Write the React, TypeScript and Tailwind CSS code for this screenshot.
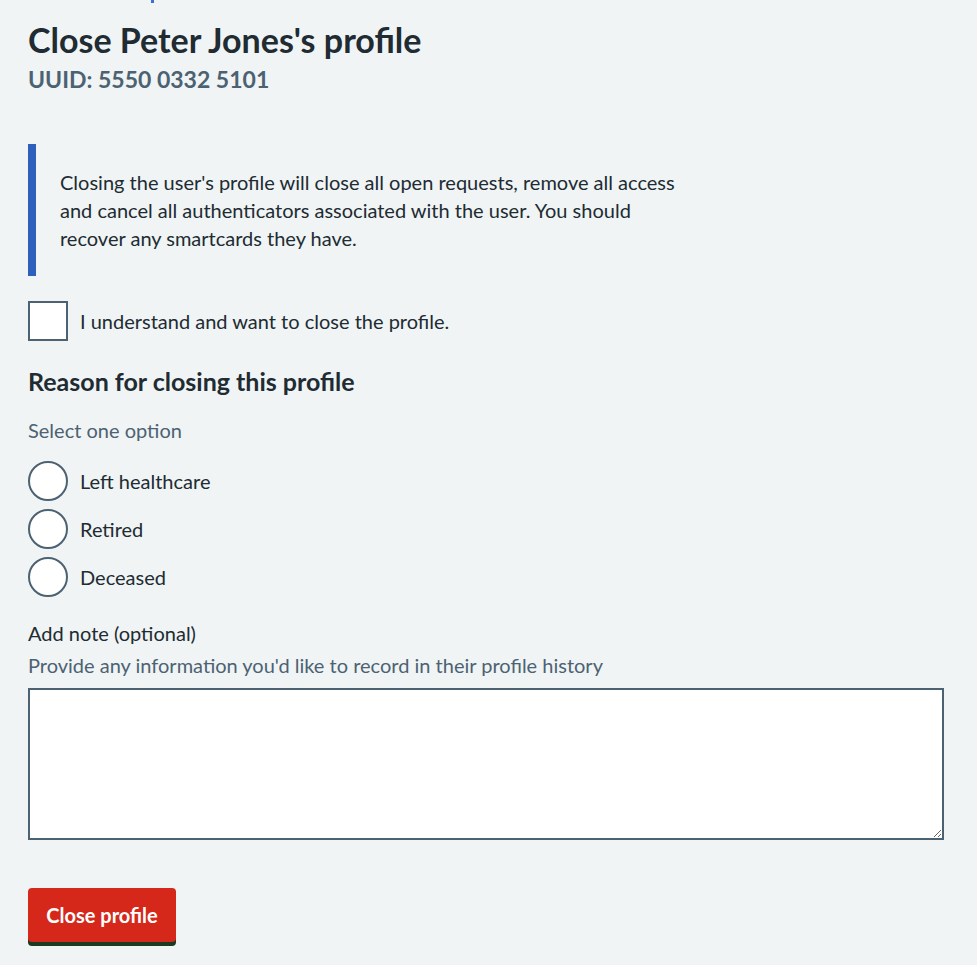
export default function App() {
  const reasons = ["Left healthcare", "Retired", "Deceased"];

  return (
    <main
      className="min-h-[965px] bg-[#f0f4f5] pl-[28px] pr-[33px] text-[#212b32]"
      style={{ fontFamily: "Lato, 'Liberation Sans', sans-serif" }}
    >
      <div className="h-[20px]">
        <span className="ml-[123px] block h-[3px] w-[3px] bg-[#3c6fd6]" />
      </div>
      <h1 className="text-[34px] font-bold leading-[40px]">Close Peter Jones's profile</h1>
      <p className="mt-[3px] text-[23px] font-bold leading-[32px] text-[#4c6272]">UUID: 5550 0332 5101</p>

      <div className="mt-[49px] border-l-[8px] border-[#2f5fba] py-[24px] pl-[24px]">
        <p className="text-[20px] leading-[28px]">
          Closing the user's profile will close all open requests, remove all access
          <br />
          and cancel all authenticators associated with the user. You should
          <br />
          recover any smartcards they have.
        </p>
      </div>

      <label className="mt-[25px] flex items-center gap-[12px]">
        <span className="h-[40px] w-[40px] shrink-0 border-2 border-[#4c6272] bg-white" />
        <span className="text-[20px] leading-[28px]">I understand and want to close the profile.</span>
      </label>

      <fieldset className="mt-[24px]">
        <legend className="text-[25px] font-bold leading-[32px]">Reason for closing this profile</legend>
        <p className="mt-[19px] text-[20px] leading-[28px] text-[#4c6272]">Select one option</p>
        <div className="mt-[17px] flex flex-col gap-[8px]">
          {reasons.map((r) => (
            <label key={r} className="flex items-center gap-[12px]">
              <span className="h-[40px] w-[40px] shrink-0 rounded-full border-2 border-[#4c6272] bg-white" />
              <span className="text-[20px] leading-[28px]">{r}</span>
            </label>
          ))}
        </div>
      </fieldset>

      <div className="mt-[22px]">
        <label className="block text-[20px] leading-[28px]">Add note (optional)</label>
        <p className="mt-[4px] text-[20px] leading-[28px] text-[#4c6272]">
          Provide any information you'd like to record in their profile history
        </p>
        <textarea className="mt-[9px] block h-[152px] w-full border-2 border-[#4c6272] bg-white" />
      </div>

      <button className="mt-[48px] h-[54px] w-[148px] rounded-[4px] bg-[#d5281b] text-[20px] font-bold text-white shadow-[0_4px_0_#1b3a1f]">
        Close profile
      </button>
    </main>
  );
}
